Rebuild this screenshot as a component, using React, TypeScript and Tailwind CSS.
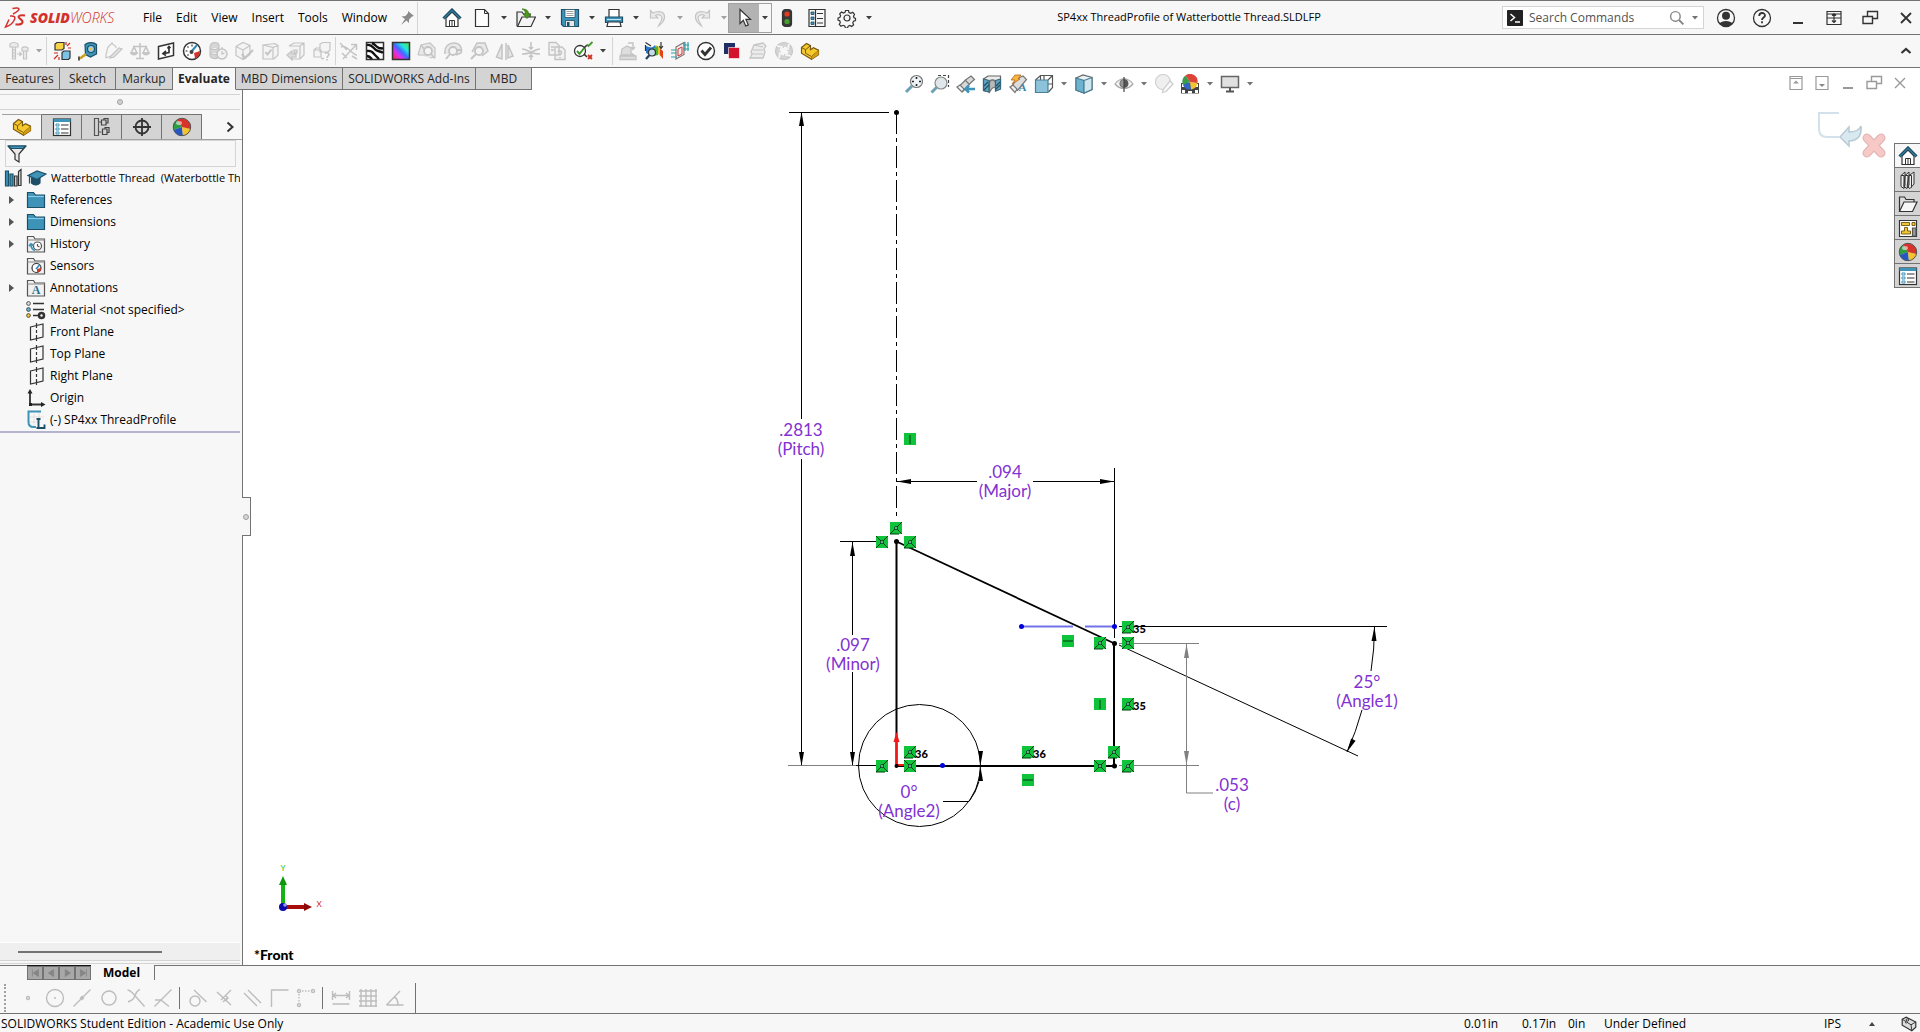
import type { ReactNode } from "react";

const BLUE = "#3d93b8";
const NAVY = "#1d4f66";
const INK = "#333333";
const DIM = "#c4c4c4";

type IconProps = { children: ReactNode; className?: string };

function Icon({ children, className = "h-5 w-5" }: IconProps) {
  return (
    <svg viewBox="0 0 20 20" fill="none" stroke={INK} strokeWidth="1.2" className={`${className} shrink-0`} aria-hidden="true">
      {children}
    </svg>
  );
}

function Caret({ label, className = "w-3.5 text-neutral-700" }: { label: string; className?: string }) {
  return (
    <button type="button" aria-label={label} className={`flex h-5 shrink-0 items-center justify-center ${className}`}>
      <svg viewBox="0 0 6 4" className="h-1 w-1.5" fill="currentColor" aria-hidden="true">
        <path d="M0 0h6L3 3.6z" />
      </svg>
    </button>
  );
}

/* ---------- shared icons ---------- */

const homeIcon = (
  <Icon>
    <path d="M4 10v8.5h12V10L10 4z" fill="#fff" />
    <path d="M7.5 18.5v-6h5v6M10 12.5v6" strokeWidth="1" />
    <path d="M1.5 10.5 10 2l8.5 8.5" stroke={NAVY} strokeWidth="3" />
    <path d="m2 10.3 8-7.8 8 7.8" stroke={BLUE} strokeWidth="1" />
  </Icon>
);

const partIcon = (
  <Icon>
    <path d="m1.5 6.5 5-4 4 2.2v4l3-2 5 2.5v4.5l-7 4.5-10-6z" fill="#f5c92d" stroke="#7a5a10" />
    <path d="m1.5 6.5 4 2.2v3.5l6 3.3v3M5.5 8.7l5-4M11.5 15.5l7-6" stroke="#7a5a10" strokeWidth="1" />
    <path d="m11.5 15.5 7-6v4.2l-7 4.5z" fill="#d29c14" stroke="none" />
  </Icon>
);

const sphereIcon = (
  <Icon>
    <path d="M10 10 5 2.8A9 9 0 0 0 1.5 13z" fill="#2f9e41" stroke="none" />
    <path d="M10 10 1.5 13A9 9 0 0 0 11 19z" fill="#2457c5" stroke="none" />
    <path d="m10 10 1 9a9 9 0 0 0 7.7-7z" fill="#f2c431" stroke="none" />
    <path d="M10 10 18.7 12A9 9 0 0 0 5 2.8z" fill="#d8332b" stroke="none" />
    <circle cx="10" cy="10" r="8.7" stroke="#555" strokeWidth="1" />
    <ellipse cx="7" cy="6" rx="3" ry="2" fill="#fff" opacity=".55" stroke="none" />
  </Icon>
);

const listIcon = (
  <Icon>
    <rect x="1.5" y="2" width="17" height="16.5" fill="#fff" />
    <path d="M1.5 3.5h17" stroke={BLUE} strokeWidth="3" />
    <path d="M4 7h3v2H4zM4 11h3v2H4zM4 15h3v2H4z" stroke={BLUE} strokeWidth="1" />
    <path d="M9 8h7.5M9 12h7.5M9 16h7.5" />
  </Icon>
);

/* ---------- title bar ---------- */

const menus = ["File", "Edit", "View", "Insert", "Tools", "Window"];

const quickTools = [
  {
    name: "New",
    dim: false,
    icon: (
      <Icon>
        <path d="M3.5 1.5h9l4 4v13h-13z" fill="#fdfdfd" />
        <path d="M12.5 1.5v4h4" strokeWidth="1" />
      </Icon>
    ),
  },
  {
    name: "Open",
    dim: false,
    icon: (
      <Icon>
        <path d="M1 18V4h5l1.5 2H14v3" fill="#eee" />
        <path d="M1.5 18.5 6 9h13.5L15 18.5z" fill="#f4f4f4" />
        <path d="M6 1c5 0 6.5 2 6.5 5H15l-4 4.5L7 6h2.5C9.5 3.5 8.5 2 6 1z" fill="#4b9a1d" stroke="#2f6f0d" strokeWidth=".7" />
      </Icon>
    ),
  },
  {
    name: "Save",
    dim: false,
    icon: (
      <Icon>
        <path d="M1.5 1.5h17v17h-15l-2-2z" fill={BLUE} stroke={NAVY} />
        <path d="M5 1.5h10v8H5z" fill="#fff" stroke={NAVY} strokeWidth=".8" />
        <path d="M6.5 3.5h7M6.5 5.5h7M6.5 7.5h7" stroke="#888" strokeWidth=".8" />
        <path d="M5.5 12.5h9v6h-9z" fill="#e8e8e8" stroke={NAVY} strokeWidth=".8" />
        <path d="M7 14h2.5v4.5H7z" fill={NAVY} stroke="none" />
      </Icon>
    ),
  },
  {
    name: "Print",
    dim: false,
    icon: (
      <Icon>
        <path d="M5 9V1.5h10V9" fill="#fff" />
        <path d="M1.5 9h17v5.5h-17z" fill={BLUE} stroke={NAVY} />
        <path d="M4 14h12l1 4.5H3z" fill="#fff" />
        <path d="M3 11.5h14" stroke="#bfe3f2" strokeWidth="1" />
      </Icon>
    ),
  },
  {
    name: "Undo",
    dim: true,
    icon: (
      <Icon>
        <path d="M2.5 2.5v7.5h7.5L7.5 7.5C12 5 16 9 12.5 14l-2 4C18 13 19 4 11 3.5 8.5 3.5 6.5 4 5 5z" fill="#e9e9e9" stroke={DIM} />
      </Icon>
    ),
  },
  {
    name: "Redo",
    dim: true,
    icon: (
      <Icon>
        <path d="M17.5 2.5v7.5H10l2.500-2.500C8 5 4 9 7.500 14l2 4C2 13 1 4 9 3.500c2.500 0 4.500.5 6 1.500z" fill="#e9e9e9" stroke={DIM} />
      </Icon>
    ),
  },
];

function Logo() {
  return (
    <div className="flex w-[143px] shrink-0 items-center pl-1 text-[#d2322d]">
      <svg viewBox="0 0 22 22" className="h-[22px] w-[22px]" fill="none" stroke="currentColor" strokeWidth="1.5" aria-hidden="true">
        <path d="M8.5 1.5c3-.8 6.5-.8 6.5.6S12 5.5 9 7" />
        <path d="M6 9c4.5-.5 6 .8 4 4.5-1.5 3-5 5.5-8.5 6.5L5 12.5" />
        <path d="M21 8.5c-4-.7-6.5 0-6.5 1.5s5 3 4 5.5c-.8 1.8-4 2.2-7 1.7" strokeWidth="2" />
      </svg>
      <span className="ml-1 text-sm leading-4 italic">
        <b className="font-extrabold">SOLID</b>
        <span className="font-light">WORKS</span>
      </span>
    </div>
  );
}

const windowButtons = [
  {
    name: "Account",
    icon: (
      <Icon>
        <circle cx="10" cy="10" r="8.5" strokeWidth="1.3" />
        <circle cx="10" cy="7.8" r="4" fill={INK} stroke="none" />
        <path d="M3.5 15.5c2-3.5 11-3.5 13 0-3 4-10 4-13 0z" fill={INK} stroke="none" />
      </Icon>
    ),
  },
  {
    name: "Help",
    icon: (
      <Icon>
        <circle cx="10" cy="10" r="8.5" strokeWidth="1.3" />
        <path d="M7.2 8c0-4 5.8-3.8 5.8-.5 0 2-3 2.2-3 4.5M10 13.3v2" strokeWidth="1.8" />
      </Icon>
    ),
  },
  { name: "Minimize", icon: <Icon><path d="M5 15h10" strokeWidth="2" /></Icon> },
  { name: "Span displays", icon: <Icon><path d="M3 3.5h14v13H3zM3 10h14M3 6h14M10 5.5v9M8 7.5l2-2 2 2M8 12.5l2 2 2-2" /></Icon> },
  { name: "Restore", icon: <Icon><path d="M7.5 8.5v-5h10v7h-5M3 8.5h9.5v7H3z" strokeWidth="1.4" /></Icon> },
  { name: "Close", icon: <Icon><path d="m5 5 10 10M15 5 5 15" strokeWidth="1.8" /></Icon> },
];

function TitleBar() {
  return (
    <header className="flex h-[35px] items-center border-y border-neutral-500 bg-[#f7f7f7]">
      <Logo />
      <nav className="flex gap-3.5">
        {menus.map((m) => (
          <button type="button" key={m}>{m}</button>
        ))}
      </nav>
      <button type="button" aria-label="Pin menu" className="ml-2.5">
        <Icon>
          <path d="m11 3 6 5-2 .5-3 3v3.5L9.5 12.5 4 17l4-6-3.5-2.5 4-.5 2.5-3z" fill="#8a8a8a" stroke="none" />
        </Icon>
      </button>
      <div className="mr-6 h-8 w-px bg-neutral-300" />
      <button type="button" aria-label="Home" className="mr-2.5">{homeIcon}</button>
      {quickTools.map((t) => (
        <div key={t.name} className="flex w-11 shrink-0 items-center">
          <button type="button" aria-label={t.name}>{t.icon}</button>
          <Caret label={`${t.name} options`} className={t.dim ? "w-6 text-neutral-400" : "w-6 text-neutral-700"} />
        </div>
      ))}
      <div className="-ml-2 flex h-[30px] border border-neutral-400">
        <button type="button" aria-label="Select" className="flex w-[30px] items-center justify-center bg-[#b3b3b3]">
          <Icon>
            <path d="M6 1.5v14l3.3-3.2 2.4 5.7 2.6-1.1-2.4-5.5h4.6z" fill="#fff" />
          </Icon>
        </button>
        <Caret label="Select options" className="mt-1 w-3 text-neutral-700" />
      </div>
      <button type="button" aria-label="Rebuild" className="flex w-[30px] justify-center">
        <Icon>
          <rect x="5.5" y="1.5" width="9" height="17" rx="3" fill="#3a3a3a" />
          <circle cx="10" cy="6" r="2.6" fill="#e33b20" stroke="none" />
          <circle cx="10" cy="13.5" r="2.6" fill="#47a02c" stroke="none" />
        </Icon>
      </button>
      <button type="button" aria-label="File properties" className="flex w-[30px] justify-center">
        <Icon>
          <path d="M2 1.5h16v17H2zM8.5 1.5v17" />
          <path d="M4 4h3v2.5H4zM4 9h3v2.5H4zM4 14h3v2.5H4z" fill={BLUE} stroke={NAVY} strokeWidth=".8" />
          <path d="M10 5.5h6M10 10.5h6M10 15h6" strokeWidth="1" />
        </Icon>
      </button>
      <button type="button" aria-label="Options" className="flex w-[30px] justify-center">
        <Icon>
          <circle cx="10" cy="10" r="3" />
          <path d="m8.5 2.5 3 0 .5 2 1.7.8 2-1 1.8 2-1 1.9.5 1.6 1.5.7v2l-2 .7-.7 1.6.8 2-1.9 1.7-1.9-1-1.6.6-.7 1.9h-2l-.8-2-1.7-.7-2 .9-1.7-1.8 1-2-.6-1.6-1.7-.7v-2l1.9-.7.7-1.7-.9-1.9 1.8-1.8 1.9 1 1.6-.6z" />
        </Icon>
      </button>
      <Caret label="Options menu" />
      <h1 className="min-w-0 flex-1 truncate text-center text-[11px]">SP4xx ThreadProfile of Watterbottle Thread.SLDLFP</h1>
      <label className="mr-1 flex h-[23px] w-[202px] items-center border border-neutral-300 bg-white pl-1">
        <svg viewBox="0 0 16 16" className="h-4 w-4 shrink-0" fill="none" stroke="#fff" aria-hidden="true">
          <path d="M.5.5h15v15H.5z" fill="#222" stroke="#222" />
          <path d="m3.5 4 4 3.5-4 3.5" strokeWidth="1.5" />
          <path d="M8 12h5" strokeWidth="1.5" />
        </svg>
        <input aria-label="Search Commands" placeholder="Search Commands" className="ml-1.5 w-0 flex-1 text-xs outline-none placeholder:text-neutral-600" />
        <Icon className="h-4 w-4">
          <circle cx="8" cy="8" r="6" stroke="#888" strokeWidth="1.8" />
          <path d="m12.5 12.5 5.5 5.5" stroke="#888" strokeWidth="2.5" />
        </Icon>
        <Caret label="Search scope" className="ml-0.5 w-4 text-neutral-500" />
      </label>
      <div className="-mr-1 flex">
        {windowButtons.map((b) => (
          <button type="button" key={b.name} aria-label={b.name} className="flex w-9 justify-center">{b.icon}</button>
        ))}
      </div>
    </header>
  );
}

/* ---------- evaluate toolbar ---------- */

const studyTools = [
  {
    name: "Interference Detection",
    icon: (
      <Icon>
        <path d="m3 3 2-1.5h7v6L10 9H3z" fill="#f7d447" />
        <path d="m10 11.5 2-1.5h6v7l-1.5 1.5H10z" fill="#7cc3e6" />
        <path d="M14 1v3M18 2l-3 3M19 7h-3M2 12h4M2 18l4-4M7 19v-3" stroke="#cc2b1f" />
      </Icon>
    ),
  },
  {
    name: "Measure",
    icon: (
      <Icon>
        <path d="M7 3.5c4-3 9-2 11.5 0V13l-6 3-5-2.5z" fill={BLUE} stroke={NAVY} />
        <circle cx="13" cy="8" r="3.5" fill="#9bd0e8" stroke={NAVY} />
        <circle cx="13" cy="8" r="1.3" fill="#f2c431" stroke="none" />
        <path d="m8 13-6 4.5" stroke="#caa21b" strokeWidth="2.5" />
        <path d="M1 15.5v4" strokeWidth="1.6" />
      </Icon>
    ),
  },
  {
    name: "Markup",
    icon: (
      <Icon>
        <path d="M2 17c-1-3 1-5 1-8 0-4 3-4 5-7 2 4 4 1 4 5M2 17l5-2" stroke={DIM} />
        <path d="m7 15 8-8 3 1-8 8-4 1z" fill="#e6e6e6" stroke={DIM} />
      </Icon>
    ),
  },
  {
    name: "Mass Properties",
    icon: (
      <Icon>
        <path d="M10 2v15M6 17.5h8M3 5.5h14M4 6l-3 6h6zM16 6l-3 6h6z" stroke={DIM} strokeWidth="1.5" />
        <path d="M1 12c1 2.5 5 2.5 6 0zM13 12c1 2.5 5 2.5 6 0z" fill={DIM} stroke={DIM} />
      </Icon>
    ),
  },
  {
    name: "Section Properties",
    icon: (
      <Icon>
        <path d="M2.5 5.5 17.5 2v12.5L2.5 18z" fill="#fff" strokeWidth="1.5" />
        <path d="M13 6v5.5l-5 1M10 10l-3 2.7 3 1.8M11.5 7.5 13 5.5l1.5 1.5" strokeWidth="1.7" />
      </Icon>
    ),
  },
  {
    name: "Sensor",
    icon: (
      <Icon>
        <circle cx="10" cy="10" r="8.5" fill="#fff" strokeWidth="1.5" />
        <path d="M3.5 10h2M10 3.5v2M5.5 5.5l1 1M5.5 14.5l1-1" />
        <path d="M18 10a8 8 0 0 1-5 7.5L12 12z" fill="#d3352a" stroke="none" />
        <path d="m9 11 6-7" stroke="#2c86b7" strokeWidth="2" />
        <circle cx="9.5" cy="11" r="2" fill="#444" stroke="none" />
      </Icon>
    ),
  },
  {
    name: "Performance Evaluation",
    icon: (
      <Icon>
        <path d="M2 6c0-5 8-6 9-2v11c-1 4-9 3-9-1zM2 7c2 2 7 2 9 0M2 12c2 2 7 2 9 0" fill="#d6d6d6" stroke={DIM} />
        <circle cx="14" cy="13" r="5" fill="#f3f3f3" stroke={DIM} strokeWidth="1.5" />
        <path d="M14 10v3l2.5-1M14 6v2" stroke={DIM} />
      </Icon>
    ),
  },
  {
    name: "Check",
    icon: (
      <Icon>
        <path d="m2 5.5 7-4 7 3v9l-7 5-7-4zM2 5.5l7 3.5v9.5M9 9l7-4.5" stroke={DIM} fill="#f4f4f4" />
        <path d="m8 13 3 4 8-8" stroke={DIM} strokeWidth="2.2" />
      </Icon>
    ),
  },
  {
    name: "Geometry Analysis",
    icon: (
      <Icon>
        <path d="m3 4 12-1.5 3 2v9.5l-4 4H3zM3 4l10 2.5V18M13 6.5l5-2" stroke={DIM} fill="#f4f4f4" />
        <path d="m5.5 11 2 2.5 4-5" stroke={DIM} strokeWidth="2" />
      </Icon>
    ),
  },
  {
    name: "Import Diagnostics",
    icon: (
      <Icon>
        <path d="m3 5 5-3h10v12l-4 4H6v-5M3 5h11v13M14 5l4-3" stroke={DIM} fill="#f4f4f4" />
        <path d="M8 9h3v3H8zM1 14l5-4v3h4v3H6v3z" fill="#ddd" stroke={DIM} />
      </Icon>
    ),
  },
  {
    name: "Compare",
    icon: (
      <Icon>
        <path d="m8 3 3-1.5h7V9l-2 2H8zM2 9h7v7H2zM2 9l2-2h4" stroke={DIM} fill="#f4f4f4" />
        <path d="M13 12.5c2-2 5 0 3.5 2-1 1-1.5 1-1.5 2.5M15 18v1.5M9 17.5h3" stroke={DIM} strokeWidth="1.6" />
      </Icon>
    ),
  },
];

const surfaceTools = [
  {
    name: "Deviation Analysis",
    icon: (
      <Icon>
        <path d="M2 6c6-3 11 8 16 8M4 18 17 4M12 3.5h5.5V9M3 12l5 5M1 2l7 7M13 15l5 3" stroke={DIM} strokeWidth="1.5" />
      </Icon>
    ),
  },
  {
    name: "Zebra Stripes",
    icon: (
      <Icon>
        <path d="M1.5 1.5h17v17h-17z" fill="#fff" strokeWidth="1.5" />
        <path d="M2 4c5-1 6 3 9 5s5 1 7 3M2 10c5-1 6 2 8 4s3 3 4 4M7 2c3 1 4 4 7 5 2 .5 3 0 4 1M2 15c2 0 3 1 5 3" stroke="#111" strokeWidth="2.4" />
      </Icon>
    ),
  },
  {
    name: "Curvature",
    icon: (
      <Icon>
        <defs>
          <linearGradient id="curv" x1="0" y1="1" x2="1" y2="0">
            <stop offset="0" stopColor="#ff2a2a" />
            <stop offset=".3" stopColor="#e32cf0" />
            <stop offset=".5" stopColor="#3c6bff" />
            <stop offset=".7" stopColor="#22e6e0" />
            <stop offset="1" stopColor="#5ae62a" />
          </linearGradient>
        </defs>
        <path d="M1.5 1.5h17v17h-17z" fill="url(#curv)" strokeWidth="1.5" />
      </Icon>
    ),
  },
  {
    name: "Draft Analysis",
    icon: (
      <Icon>
        <path d="m1 14 3-10 9-2 5 5v9l-5 1M1 14h11" stroke={DIM} fill="#e9e9e9" />
        <circle cx="11" cy="10" r="4" stroke={DIM} strokeWidth="1.8" fill="#f4f4f4" />
        <path d="m14 13 4 4.5M4 4l3 4" stroke={DIM} strokeWidth="1.5" />
      </Icon>
    ),
  },
  {
    name: "Undercut Analysis",
    icon: (
      <Icon>
        <path d="M2 13C1 5 6 2 11 2s9 4 7 10l-5 2" stroke={DIM} fill="#e9e9e9" strokeWidth="1.5" />
        <circle cx="10" cy="10" r="4" stroke={DIM} strokeWidth="1.8" fill="#f4f4f4" />
        <path d="m7 13-4 5M14 9h5" stroke={DIM} strokeWidth="2" />
      </Icon>
    ),
  },
  {
    name: "Parting Line Analysis",
    icon: (
      <Icon>
        <path d="m3 11 5-9h8l3 8-6 5" stroke={DIM} fill="#e9e9e9" strokeWidth="1.5" />
        <circle cx="10" cy="10" r="4" stroke={DIM} strokeWidth="1.8" fill="#f4f4f4" />
        <path d="m7 13-5 5" stroke={DIM} strokeWidth="2.2" />
      </Icon>
    ),
  },
  {
    name: "Symmetry Check",
    icon: (
      <Icon>
        <path d="M1.5 16 7 3v15zM11 2v17M18 15l-5-11v13z" stroke={DIM} fill="#e6e6e6" strokeWidth="1.5" />
      </Icon>
    ),
  },
  {
    name: "Thickness Analysis",
    icon: (
      <Icon>
        <path d="M1 8c5 0 6 3 9 3s4-3 9-3M1 13c5 0 6-1 9-1s4 1 9 1M10 1v7M8 6l2 2 2-2M10 19v-5M8 16l2-2 2 2" stroke={DIM} strokeWidth="1.6" />
      </Icon>
    ),
  },
  {
    name: "Compare Documents",
    icon: (
      <Icon>
        <path d="M2 1.5h7l3 3V14H2zM8 6h7l3 3v9.5H8z" stroke={DIM} fill="#f2f2f2" strokeWidth="1.4" />
        <path d="M11 11c1-2 4-1 3.5 1-.5 1-1.5 1-1.5 2.5M13 16v1.5M4 6h3M4 9h3" stroke={DIM} strokeWidth="1.5" />
      </Icon>
    ),
  },
  {
    name: "Check Active Document",
    icon: (
      <Icon>
        <circle cx="7" cy="10" r="5.5" strokeWidth="1.3" fill="#fff" />
        <path d="m4 10 2.5 3 5-6.5" stroke="#3e9a28" strokeWidth="2" />
        <path d="m11 7 3-3M11 13l3 3" strokeWidth="1.6" />
        <path d="m14 3.5 1.5 1.5 4-4" stroke="#3e9a28" strokeWidth="1.8" />
        <path d="m15 14 4 4M19 14l-4 4" stroke="#d0301e" strokeWidth="1.8" />
      </Icon>
    ),
  },
];

const addinTools = [
  {
    name: "Costing",
    icon: (
      <Icon>
        <path d="M2 15h16v3.5H2zM4 8l5-3 4 2v5l3 2H3z" stroke={DIM} fill="#dedede" strokeWidth="1.3" />
        <path d="M10 2h5v6M13 6l2 2.5L17 6" stroke={DIM} strokeWidth="1.4" />
      </Icon>
    ),
  },
  {
    name: "SimulationXpress",
    icon: (
      <Icon>
        <path d="M3 5c6 3 6 3 9-1l6 5v8c-4-5-6-6-9-2z" fill="#e9c52c" stroke="none" />
        <path d="M2 5c4 2 7 2 9-1l2 6-5 5-6-3z" fill="#2378d6" stroke="none" />
        <path d="m10 7 4-2v9l-4 1z" fill="#45b43a" stroke="none" />
        <path d="m16 8 3 2v8l-3-4z" fill="#e2411e" stroke="none" />
        <path d="M1.5 1.5 7 5M1.5 4v6M17 1v6M15 5l2 2.5L19 5" />
        <circle cx="8" cy="11.5" r="3.5" fill="#c3dbe8" />
        <path d="m5.5 14-3.5 4" strokeWidth="2.2" stroke="#246" />
      </Icon>
    ),
  },
  {
    name: "FloXpress",
    icon: (
      <Icon>
        <path d="m6 6 8-4.5v12L6 18z" fill="#fbeceb" stroke="#777" />
        <path d="m8 8 4-2v7l-4 2z" stroke="#c33" strokeWidth="1" />
        <path d="M1 9h5M1 12h5M1 16h6M13 4h6M13 8h6M15 1v9M18 1v9" stroke="#2aa0a8" />
      </Icon>
    ),
  },
  {
    name: "DFMXpress",
    icon: (
      <Icon>
        <circle cx="10" cy="10" r="8.5" fill="#fff" strokeWidth="1.4" />
        <path d="m5.5 9.5 3.5 4 6-7" strokeWidth="2.8" />
      </Icon>
    ),
  },
  {
    name: "DriveWorksXpress",
    icon: (
      <Icon>
        <path d="M2 2h11v11H2z" fill="#1f2f66" stroke="none" />
        <path d="M6.5 6.5h11v11h-11z" fill="#d3122d" stroke="#fff" strokeWidth=".6" />
      </Icon>
    ),
  },
  {
    name: "Sustainability",
    icon: (
      <Icon>
        <path d="m6 4 9-2 3 3-2 3 1 3-2 6H2l2-4-1-2z" stroke={DIM} fill="#ececec" strokeWidth="1.3" />
        <path d="m6 4 9 2M5 9h10M4 13h11" stroke={DIM} />
      </Icon>
    ),
  },
  {
    name: "Part Reviewer",
    icon: (
      <Icon>
        <circle cx="10" cy="10" r="6" stroke="#d4d4d4" strokeWidth="4.5" />
        <circle cx="10" cy="10" r="8.5" stroke={DIM} />
        <circle cx="10" cy="10" r="3.8" stroke={DIM} />
        <path d="m3 5 5 1-2 4M17 15l-5-1 2-4M15 3l-1 5-4-2M5 17l1-5 4 2" stroke="#f7f7f7" strokeWidth="1.7" />
      </Icon>
    ),
  },
  { name: "Part", icon: partIcon },
];

function ToolGroup({ tools }: { tools: { name: string; icon: ReactNode }[] }) {
  return (
    <div className="flex">
      {tools.map((t) => (
        <button type="button" key={t.name} aria-label={t.name} className="flex w-[26px] justify-center">{t.icon}</button>
      ))}
    </div>
  );
}

function CommandBar() {
  return (
    <div className="flex h-[33px] items-center border-b border-neutral-500 bg-[#f7f7f7] pl-1.5">
      <button type="button" aria-label="Fasteners" className="flex w-[26px] justify-center">
        <Icon>
          <path d="M1 3c2-2 6-2 8 0v3H1zM3.5 6v12h3V6M13 7c1-1.5 4-1.5 6 0v3h-6zM14.5 10v8h3v-8M3.5 9h3M3.5 12h3M3.5 15h3M8 13h4M10.5 11l2 2-2 2" fill="#ececec" stroke={DIM} />
        </Icon>
      </button>
      <Caret label="Fastener options" className="w-3.5 text-neutral-400" />
      <div className="mr-0.5 h-7 w-px bg-neutral-300" />
      <ToolGroup tools={studyTools} />
      <div className="h-7 w-px bg-neutral-300" />
      <ToolGroup tools={surfaceTools} />
      <Caret label="Check options" />
      <div className="mx-0.5 h-7 w-px bg-neutral-300" />
      <ToolGroup tools={addinTools} />
      <button type="button" aria-label="Collapse toolbar" className="mr-1 ml-auto">
        <Icon><path d="m5.5 12 4.5-4 4.5 4" strokeWidth="2.2" /></Icon>
      </button>
    </div>
  );
}

const commandTabs = [
  { name: "Features", width: "w-[60px]" },
  { name: "Sketch", width: "w-14" },
  { name: "Markup", width: "w-[57px]" },
  { name: "Evaluate", width: "w-[63px]" },
  { name: "MBD Dimensions", width: "w-[107px]" },
  { name: "SOLIDWORKS Add-Ins", width: "w-[133px]" },
  { name: "MBD", width: "w-14" },
];

function CommandTabs() {
  return (
    <div role="tablist" className="relative z-10 flex h-[22px] w-max">
      {commandTabs.map((t) => {
        const active = t.name === "Evaluate";
        return (
          <button
            type="button"
            role="tab"
            aria-selected={active}
            key={t.name}
            className={`${t.width} border-r border-b border-neutral-500 text-center whitespace-nowrap ${
              active ? "border-b-[#f7f7f7] bg-[#f7f7f7] font-bold" : "bg-[#d4d4d4]"
            } text-neutral-800`}
          >
            {t.name}
          </button>
        );
      })}
    </div>
  );
}

/* ---------- feature tree ---------- */

const folder = (
  <Icon>
    <path d="M1.5 17.5v-15h6l2 2.5h9v12.5z" fill={BLUE} stroke={NAVY} />
    <path d="M2.2 6.5h15.6" stroke="#8accea" />
  </Icon>
);

function GreyFolder({ children }: { children: ReactNode }) {
  return (
    <Icon>
      <path d="M1.5 18V2.5h6L9 5h9.5v13z" fill="#f1f1f1" stroke="#555" />
      <path d="M1.5 6h17" stroke="#999" />
      {children}
    </Icon>
  );
}

const plane = (
  <Icon>
    <path d="M4.5 5 17 2v13L4.5 18zM10.5 1v5M10.5 8v3M10.5 13v6" />
  </Icon>
);

const treeItems = [
  { name: "References", open: true, icon: folder },
  { name: "Dimensions", open: true, icon: folder },
  {
    name: "History",
    open: true,
    icon: (
      <GreyFolder>
        <circle cx="11.5" cy="12" r="4" stroke="#555" fill="#fff" />
        <path d="M11.5 10v2l2 1" stroke="#555" />
        <path d="M5 10.5c0 3 1 5 4 6M3 12l2-2 2.5 1.5" stroke={BLUE} strokeWidth="1.8" />
      </GreyFolder>
    ),
  },
  {
    name: "Sensors",
    open: false,
    icon: (
      <GreyFolder>
        <circle cx="10.5" cy="12" r="4.5" fill="#fff" stroke={INK} />
        <path d="m10 13 3.5-4" stroke="#2c86b7" strokeWidth="1.6" />
        <path d="M15 12a4.5 4.5 0 0 1-4 4.5V13z" fill="#d3352a" stroke="none" />
      </GreyFolder>
    ),
  },
  {
    name: "Annotations",
    open: true,
    icon: (
      <GreyFolder>
        <text x="10" y="16" textAnchor="middle" fontFamily="Liberation Serif, serif" fontWeight="700" fontSize="12" fill="#276f95" stroke="none">A</text>
      </GreyFolder>
    ),
  },
  {
    name: "Material <not specified>",
    open: false,
    icon: (
      <Icon>
        <path d="M7 3.5h11M7 9.5h11M7 15.5h7" strokeWidth="1.7" />
        <circle cx="2.5" cy="3.5" r="1.9" fill="#ddd" strokeWidth=".8" />
        <circle cx="2.5" cy="9.5" r="1.9" fill="#63b5da" strokeWidth=".8" />
        <circle cx="2.5" cy="15.5" r="1.9" fill="#f2c431" strokeWidth=".8" />
        <circle cx="15.5" cy="15.5" r="2.5" strokeWidth="2.5" />
      </Icon>
    ),
  },
  { name: "Front Plane", open: false, icon: plane },
  { name: "Top Plane", open: false, icon: plane },
  { name: "Right Plane", open: false, icon: plane },
  {
    name: "Origin",
    open: false,
    icon: (
      <Icon>
        <path d="M4 3v13.5h13" strokeWidth="1.8" />
        <path d="m1.5 5.5 2.5-4.5 2.5 4.5zM15 14l4.500 2.500L15 19zM3 15h3v3H3z" fill="#222" stroke="none" />
      </Icon>
    ),
  },
  {
    name: "(-) SP4xx ThreadProfile",
    open: false,
    icon: (
      <Icon>
        <path d="M8 4v12M13 2v9M3 7h15M3 12h9" stroke="#d8d8d8" strokeWidth=".7" />
        <path d="M15 1.5H2.5V12c0 3.5 1.5 5 5 5H10" stroke={BLUE} strokeWidth="2" />
        <path d="M10.5 9h4M12.5 9v9M10.5 18h8v-3.5" stroke={NAVY} strokeWidth="1.9" />
      </Icon>
    ),
  },
];

const managerTabs = [
  { name: "FeatureManager", icon: partIcon },
  { name: "PropertyManager", icon: listIcon },
  {
    name: "ConfigurationManager",
    icon: (
      <Icon>
        <path d="M2.5 1.5h4v17h-4zM6.5 5h3M6.5 15h3" stroke="#555" />
        <path d="M9.5 3H14v5H9.5zM10.5 12H15v5.5h-4.5zM12 3V1.5h4V6h-2M13 12v-1.5h4v5h-2" stroke="#444" />
      </Icon>
    ),
  },
  {
    name: "DimXpertManager",
    icon: (
      <Icon>
        <circle cx="10" cy="10" r="6.5" strokeWidth="1.8" />
        <path d="M10 1v18M1 10h18" strokeWidth="1.8" />
      </Icon>
    ),
  },
  { name: "DisplayManager", icon: sphereIcon },
];

function FeaturePanel() {
  return (
    <aside className="flex min-h-0 flex-1 flex-col border-r border-neutral-500 bg-[#f7f7f7]">
      <div className="mt-1 mr-0.5 flex h-4 items-center justify-center border-y border-neutral-300">
        <span className="h-1.5 w-1.5 rounded-full border border-neutral-400 bg-neutral-300" />
      </div>
      <div className="mt-1 flex h-[26px] shrink-0 items-stretch border-b border-neutral-400 pl-0.5">
        {managerTabs.map((t, i) => (
          <button
            type="button"
            key={t.name}
            aria-label={t.name}
            className={`flex w-10 items-center justify-center border-t border-r border-neutral-500 ${i === 0 ? "border-t-neutral-400" : "bg-[#d4d4d4]"}`}
          >
            {t.icon}
          </button>
        ))}
        <button type="button" aria-label="More tabs" className="ml-[18px]">
          <Icon><path d="m7.5 5.5 5 4.5-5 4.5" strokeWidth="2" /></Icon>
        </button>
      </div>
      <label className="mr-1.5 ml-[5px] flex h-[27px] shrink-0 items-center border border-neutral-300 pb-0.5 pl-px">
        <Icon>
          <path d="M1.5 3.5h17L12 11v8l-4-2.5V11z" fill="#e9e9e9" />
          <path d="M1.5 2.8h17l-2.2 2.7H3.7z" fill={BLUE} stroke={NAVY} />
        </Icon>
        <input aria-label="Filter tree" className="min-w-0 flex-1 outline-none" />
      </label>
      <ul className="mr-0.5 overflow-hidden border-b-2 border-[#b4b4cf] whitespace-nowrap">
        <li className="flex h-[22px] items-center pl-1">
          <Icon>
            <path d="M1.5 3h3v15h-3zM6 6h3v12H6z" fill={BLUE} stroke={NAVY} />
            <path d="M10.5 8H13v10h-2.5zM14.5 3.5l2.5-2v16h-2.5z" fill="#ddd" />
          </Icon>
          <Icon className="ml-[3px] h-5 w-5">
            <path d="M4.5 10v5c3 3 7 2 8.5 0v-4.5z" fill={NAVY} stroke={NAVY} />
            <path d="m1 7.5 9-4.5 9 3-9 5.5z" fill={BLUE} stroke={NAVY} />
            <path d="M2.5 8.5v7" stroke={NAVY} />
          </Icon>
          <span className="ml-1 text-[11px] whitespace-pre">Watterbottle Thread  (Waterbottle Th</span>
        </li>
        {treeItems.map((t) => (
          <li key={t.name} className="flex h-[22px] items-center pl-[9px]">
            <span className="flex w-[17px] shrink-0">
              {t.open && (
                <svg viewBox="0 0 5 8" className="h-2 w-[5px]" fill="#555" aria-hidden="true">
                  <path d="m0 0 5 4-5 4z" />
                </svg>
              )}
            </span>
            {t.icon}
            <span className="ml-1">{t.name}</span>
          </li>
        ))}
      </ul>
      <div className="mt-auto mr-0.5 flex h-[18px] items-center border-t border-white bg-[#efefef] pl-[18px]">
        <div className="h-0.5 w-36 bg-neutral-500" />
      </div>
      <div className="mr-0.5 mb-px h-1 border-y border-neutral-300" />
    </aside>
  );
}

/* ---------- heads-up view toolbar ---------- */

const viewTools = [
  {
    name: "Zoom to Fit",
    menu: false,
    icon: (
      <Icon>
        <circle cx="12.5" cy="7.5" r="6" fill="#eef3f5" stroke="#777" />
        <path d="M12.5 3v2M12.5 10v2M8 7.5h2M15 7.5h2" stroke="#222" strokeWidth="1.6" />
        <path d="m8 12-6 6" stroke="#6ea0b5" strokeWidth="3" />
      </Icon>
    ),
  },
  {
    name: "Zoom to Area",
    menu: false,
    icon: (
      <Icon>
        <path d="M8 1.5h10.5V13" strokeDasharray="3 2" stroke="#444" />
        <circle cx="11" cy="9" r="6" fill="#dfe7ea" stroke="#888" />
        <path d="m6.5 13.5-5 5" stroke="#6ea0b5" strokeWidth="3" />
      </Icon>
    ),
  },
  {
    name: "Previous View",
    menu: false,
    icon: (
      <Icon>
        <path d="m15 2 3.5 3.5-4 3.5-7 8-5-4 7-7z" fill="#d8d8d8" stroke="#777" />
        <path d="m1 13 3-2 4 4-2 3zM9 6l4 4" fill="#f4f4f4" stroke="#777" />
        <path d="M10 15h9M13 11.5 9.5 15l3.5 3.5" stroke={BLUE} strokeWidth="2.5" />
      </Icon>
    ),
  },
  {
    name: "Section View",
    menu: false,
    icon: (
      <Icon>
        <path d="M1.5 5 6 2h12.5v10l-5 3V8c0-3-6-3-6 0v10l-6-1.5z" fill="#ececec" stroke="#666" />
        <path d="M7.5 18V8.5c1-3 5-3 6 0V13l-3 1z" fill="#b9b9b9" stroke="#777" />
        <path d="M1.5 5 7 6.5V18l-5.5-1.5zM13.5 6.500l5-1.500v10l-5 2z" fill="#5aa7c6" stroke="#39687b" />
        <path d="m2 12 4-4M2 16l5-5M14 12l4-4M14 15l4-4" stroke="#264e5e" />
      </Icon>
    ),
  },
  {
    name: "Dynamic Annotation Views",
    menu: false,
    icon: (
      <Icon>
        <path d="m15 2 3.5 3.5-9 11-6-4 6-8z" fill="#ddd" stroke="#777" />
        <path d="m2 13 3-2 4 4-2 3.5z" fill="#f1f1f1" stroke="#777" />
        <path d="M7 1h6l-3 4h2l-8 5 3-4H3z" fill="#f6b73c" stroke="#b5651d" strokeWidth=".8" />
        <text x="14.5" y="17" textAnchor="middle" fontFamily="Liberation Serif, serif" fontWeight="700" fontSize="11" fill="#3d88a8" stroke="none">A</text>
      </Icon>
    ),
  },
  {
    name: "View Orientation",
    menu: true,
    icon: (
      <Icon>
        <path d="m1.5 6 5-4.5h12v12l-4 4.5M14 6l4.5-4.5M6.5 2v4M14 10h4M10 1.5V6" stroke="#555" fill="#fff" />
        <path d="M1.5 6H14v12.5H1.5z" fill="#8cc3da" stroke="#4a7f95" />
      </Icon>
    ),
  },
  {
    name: "Display Style",
    menu: true,
    icon: (
      <Icon>
        <path d="m2 4 7-3 9 2.5v12l-8 3.5-8-3z" fill="#e7f3f8" stroke="#666" />
        <path d="m2 4 8 2.5V19l-8-3z" fill="#6db3cf" stroke="#4a7f95" />
        <path d="m10 6.5 8-3v12L10 19z" fill="#cfe6ef" stroke="#4a7f95" />
      </Icon>
    ),
  },
  {
    name: "Hide/Show Items",
    menu: true,
    icon: (
      <Icon>
        <path d="M1 10c5-7 13-7 18 0-5 6-13 6-18 0z" fill="#f3f3f3" stroke="#aaa" />
        <circle cx="10" cy="9.5" r="4" fill="#999" stroke="#777" />
        <path d="M10 5.5a4 4 0 0 1 0 8z" fill="#555" stroke="none" />
        <path d="M10 3v15" stroke="#444" />
      </Icon>
    ),
  },
  {
    name: "Edit Appearance",
    menu: false,
    icon: (
      <Icon>
        <circle cx="9" cy="8" r="7.5" fill="#efefef" stroke="#d0d0d0" />
        <path d="m9 16 7-9 3 3-7 7.5-3.5 1z" fill="#fafafa" stroke="#cbcbcb" />
      </Icon>
    ),
  },
  {
    name: "Apply Scene",
    menu: true,
    icon: (
      <Icon>
        <path d="M1 9h18v10.5H1z" fill="#444" stroke="none" />
        <path d="M2 16h3v3H2zM8 17h4v2.5H8zM15 16h3v3h-3zM2 10h2v3H2zM16 10h2v3h-2z" fill="#fff" stroke="none" />
        <path d="M10 8 5.5 1.5A7.5 7.5 0 0 0 3 11z" fill="#3a9d4a" stroke="none" />
        <path d="M10 8 3 11a7.5 7.5 0 0 0 8 4.5z" fill="#2e66c8" stroke="none" />
        <path d="m10 8 1 7.5A7.5 7.5 0 0 0 17.4 9z" fill="#f2c431" stroke="none" />
        <path d="M10 8 17.4 9A7.5 7.5 0 0 0 5.5 1.5z" fill="#dd4438" stroke="none" />
      </Icon>
    ),
  },
  {
    name: "View Settings",
    menu: true,
    icon: (
      <Icon>
        <path d="M1.5 2.5h17v11h-17z" fill="#e0e0e0" stroke="#666" strokeWidth="1.5" />
        <path d="M10 13.5v4M6 17.5h8" stroke="#555" strokeWidth="2" />
      </Icon>
    ),
  },
];

const documentButtons = [
  { name: "Expand up", icon: <Icon><path d="M4 3.5h12v13H4zM4 5.5h12" stroke="#999" /><path d="m7 10.5 3-3 3 3z" fill="#999" stroke="none" /></Icon> },
  { name: "Expand down", icon: <Icon><path d="M4 3.5h12v13H4z" stroke="#999" /><path d="m7 11 3 3 3-3z" fill="#888" stroke="none" /></Icon> },
  { name: "Minimize document", icon: <Icon><path d="M5 15h10" stroke="#999" strokeWidth="2" /></Icon> },
  { name: "Restore document", icon: <Icon><path d="M7.5 8.5v-5h10v7h-5M3 8.5h9.5v7H3z" stroke="#999" strokeWidth="1.4" /></Icon> },
  { name: "Close document", icon: <Icon><path d="m5 5 10 10M15 5 5 15" stroke="#999" strokeWidth="1.4" /></Icon> },
];

const taskTabs = [
  { name: "Resources", icon: homeIcon },
  {
    name: "Design Library",
    icon: (
      <Icon>
        <path d="M3 5.5 7 2v13l-1 3.5-3-2zM7 5.5 11 2v13l-2 3.5-3-2zM11 5.5 16 2v12l-4 4.5-3-2zM3 5.5h3v12M7 5.5h3v12M11 5.5h2.5v12" fill="#eee" strokeWidth="1" />
      </Icon>
    ),
  },
  {
    name: "File Explorer",
    icon: (
      <Icon>
        <path d="M1.5 17.5V3h5L8 5.5h8V8" fill="#ddd" />
        <path d="M1.5 17.5 6 8h13l-4.5 9.5z" fill="#f7f7f7" />
      </Icon>
    ),
  },
  {
    name: "View Palette",
    icon: (
      <Icon>
        <path d="M1.5 2.5h17v16h-17z" fill="#fff" />
        <path d="M3.5 4.5h8v3h-8zM14 4.5h3v3h-3zM6.5 9.5h3V13h3v3h-9v-3h3z" fill="#f2c431" stroke="#6b5510" strokeWidth=".9" />
        <path d="M14.5 10H18v8h-3.5z" fill="#999" stroke="#555" />
      </Icon>
    ),
  },
  { name: "Appearances", icon: sphereIcon },
  { name: "Custom Properties", icon: listIcon },
];

/* ---------- sketch ---------- */

type RelationKind = "v" | "h" | "c" | "x";

const relations: { x: number; y: number; kind: RelationKind; tag?: string }[] = [
  { x: 910, y: 439, kind: "v" },
  { x: 896, y: 528, kind: "c" },
  { x: 882, y: 542, kind: "x" },
  { x: 910, y: 542, kind: "c" },
  { x: 1068, y: 641, kind: "h" },
  { x: 1100, y: 643, kind: "c" },
  { x: 1128, y: 643, kind: "x" },
  { x: 1128, y: 627, kind: "c", tag: "35" },
  { x: 1100, y: 704, kind: "v" },
  { x: 1128, y: 704, kind: "c", tag: "35" },
  { x: 1114, y: 752, kind: "c" },
  { x: 1100, y: 766, kind: "x" },
  { x: 1128, y: 766, kind: "c" },
  { x: 1028, y: 752, kind: "c", tag: "36" },
  { x: 1028, y: 780, kind: "h" },
  { x: 910, y: 752, kind: "c", tag: "36" },
  { x: 910, y: 766, kind: "x" },
  { x: 882, y: 766, kind: "c" },
];

const relationGlyph = {
  v: "M0-4V5",
  h: "M-5 0H5",
  c: "M6-6 1-1M-6 6l5-5M1 1l5 5M-6 6H3",
  x: "M-6-6l5 5M6-6 1-1M-6 6l5-5M1 1l5 5",
};

const labels = [
  { x: 801, y: 436, value: ".2813", name: "(Pitch)" },
  { x: 1005, y: 478, value: ".094", name: "(Major)" },
  { x: 853, y: 651, value: ".097", name: "(Minor)" },
  { x: 909, y: 798, value: "0°", name: "(Angle2)" },
  { x: 1367, y: 688, value: "25°", name: "(Angle1)" },
  { x: 1232, y: 791, value: ".053", name: "(c)" },
];

// Arrow heads point at (x, y); angle 0 is up.
const arrows = [
  { x: 801.5, y: 112, a: 0, fill: "#000" },
  { x: 801.5, y: 766, a: 180, fill: "#000" },
  { x: 852.5, y: 542, a: 0, fill: "#000" },
  { x: 852.5, y: 766, a: 180, fill: "#000" },
  { x: 897, y: 481.5, a: -90, fill: "#000" },
  { x: 1114, y: 481.5, a: 90, fill: "#000" },
  { x: 1186.5, y: 644, a: 0, fill: "#808080" },
  { x: 1186.5, y: 765, a: 180, fill: "#808080" },
  { x: 1374.5, y: 627, a: 2, fill: "#000" },
  { x: 1347, y: 752, a: 207, fill: "#000" },
  { x: 980.5, y: 765, a: 180, fill: "#000" },
  { x: 980.5, y: 767, a: 0, fill: "#000" },
];

function Sketch() {
  return (
    <svg className="absolute inset-0 h-full w-full" fill="none" stroke="#000" role="img" aria-label="Thread profile sketch">
      <g transform="translate(-243 -68)">
        <g>
          <path d="M789 112.5h100M801.5 112v307M801.5 459v307" />
          <path d="M840 541.5h37M852.5 542v93M852.5 672v94M840 765.5h37" />
          <path d="M897 481.5h80M1033 481.5h81M1114.5 468v170" />
          <path d="M1119 626.5h268M1119 645l239 111" />
          <path d="M1374.5 627q0 22-3.5 44M1362 710q-6 22-15 42" />
          <path d="M943 801.5h26q7-9 10-20" />
          <circle cx="919.5" cy="765.5" r="61" />
          <path d="M788 765.5h68" stroke="#808080" />
          <path d="M1119 643.5h80M1119 765.5h80M1186.5 643v150H1213" stroke="#808080" />
        </g>
        <path d="M896.5 112v407" strokeDasharray="22 4 4 4" />
        <path d="M896.5 541V766H1114M1114 766V643" strokeWidth="2" />
        <path d="m896.5 541.5 218 102" strokeWidth="1.8" />
        <path d="M1021 626.5h52M1085 626.5h29" stroke="#7272e8" strokeWidth="2" />
        <path d="M896.5 765V738M897 765h10" stroke="#f01818" strokeWidth="2" />
        <path d="m896.5 732 3 10h-6z" fill="#f01818" stroke="none" />
        {arrows.map((a, i) => (
          <path key={i} d="M0 0 2.5 14h-5z" fill={a.fill} stroke="none" transform={`translate(${a.x} ${a.y}) rotate(${a.a})`} />
        ))}
        <g fill="#000" stroke="none">
          <circle cx="896.5" cy="112.5" r="2.5" />
          <circle cx="896.5" cy="541.5" r="2.5" />
          <circle cx="1114.5" cy="643.5" r="2.5" />
          <circle cx="1114.5" cy="766" r="2.5" />
          <circle cx="896.5" cy="766" r="2" />
        </g>
        <g fill="#0000d8" stroke="none">
          <circle cx="1021.5" cy="626.5" r="2.5" />
          <circle cx="1114.5" cy="626.5" r="2.5" />
          <circle cx="942.5" cy="765.5" r="2.5" />
        </g>
        {relations.map((r) => (
          <g key={`${r.x}-${r.y}`} transform={`translate(${r.x} ${r.y})`}>
            <path d="M-6-6H6V6H-6z" fill="#0fc43a" stroke="none" />
            <path d={relationGlyph[r.kind]} stroke="#003b10" />
            {(r.kind === "c" || r.kind === "x") && <circle r="1.5" fill="#7fd791" stroke="#123" strokeWidth=".8" />}
            {r.tag && (
              <text x="5" y="6" className="font-['Lato'] text-[11px] font-black" fill="#000" stroke="none">{r.tag}</text>
            )}
          </g>
        ))}
        <g className="font-['Lato'] text-[17px]" fill="#8232d2" stroke="none" textAnchor="middle">
          {labels.map((l) => (
            <text key={l.name} x={l.x} y={l.y}>
              {l.value}
              <tspan x={l.x} dy="19">{l.name}</tspan>
            </text>
          ))}
        </g>
      </g>
    </svg>
  );
}

function Triad() {
  return (
    <svg viewBox="0 0 60 56" className="h-14 w-[60px]" aria-hidden="true">
      <path d="M17 21h4v26h-4z" fill="#12b312" />
      <path d="m19 15 4 9h-8z" fill="#0c960c" />
      <path d="M19 44h21v4H19z" fill="#a80d0d" />
      <path d="m48 46-8-4v8z" fill="#8c0a0a" />
      <circle cx="19" cy="46" r="4" fill="#0a0aa8" />
      <circle cx="21" cy="44" r="1.8" fill="#9a9ae6" />
      <text x="19" y="10" textAnchor="middle" className="font-['Lato'] text-[8px]" fill="#19c419">Y</text>
      <text x="55" y="46" textAnchor="middle" className="font-['Lato'] text-[8px]" fill="#d42020">X</text>
    </svg>
  );
}

function Viewport() {
  return (
    <main className="relative min-w-0 flex-1 bg-white">
      <Sketch />
      <div className="relative flex h-[31px] items-center justify-center pr-1.5">
        {viewTools.map((t) => (
          <div key={t.name} className="flex">
            <button type="button" aria-label={t.name} className="flex w-[26px] justify-center">{t.icon}</button>
            {t.menu && <Caret label={`${t.name} options`} className="w-3.5 text-neutral-500" />}
          </div>
        ))}
      </div>
      <div className="absolute top-[5px] right-[7px] flex">
        {documentButtons.map((b) => (
          <button type="button" key={b.name} aria-label={b.name} className="flex w-[26px] justify-center">{b.icon}</button>
        ))}
      </div>
      <div className="absolute top-8 right-8 flex">
        <button type="button" aria-label="Exit sketch">
          <svg viewBox="0 0 48 40" className="h-10 w-12" fill="none" aria-hidden="true">
            <path d="M23 3H3v16c0 5 3 8 8 8h12" stroke="#d3e2ea" strokeWidth="2" />
            <path d="m24 27 9-10v5c6 0 10-1 12-6 1 10-4 15-12 15v5z" fill="#d9e9f2" stroke="#b9c9d3" strokeWidth="1.5" />
          </svg>
        </button>
        <button type="button" aria-label="Cancel sketch" className="-ml-1 mt-8">
          <svg viewBox="0 0 28 28" className="h-7 w-7" fill="none" strokeLinecap="round" aria-hidden="true">
            <path d="m7 6 14 15M21 6 7 21" stroke="#e2b5b5" strokeWidth="9" />
            <path d="m7 6 14 15M21 6 7 21" stroke="#f6c8c6" strokeWidth="6.5" />
          </svg>
        </button>
      </div>
      <div className="absolute top-[75px] right-0 flex flex-col border-t border-l border-neutral-500">
        {taskTabs.map((t, i) => (
          <button
            type="button"
            key={t.name}
            aria-label={t.name}
            className={`flex h-6 w-[25px] items-center justify-center border-b border-neutral-500 ${i === 0 ? "bg-[#f7f7f7]" : "bg-[#d4d4d4]"}`}
          >
            {t.icon}
          </button>
        ))}
      </div>
      <button
        type="button"
        aria-label="Collapse panel"
        className="absolute top-[429px] -left-px flex h-[39px] w-[9px] items-center justify-center border border-l-0 border-neutral-500 bg-[#f7f7f7]"
      >
        <span className="h-1.5 w-1.5 rounded-full border border-neutral-400 bg-neutral-300" />
      </button>
      <div className="absolute bottom-0 left-[11px] flex flex-col">
        <span className="ml-2.5"><Triad /></span>
        <span className="mt-7 font-['Lato'] text-sm leading-5 font-black text-black">*Front</span>
      </div>
    </main>
  );
}

/* ---------- bottom bars ---------- */

const pageButtons = [
  { name: "First tab", d: "M4 3v8M11 3v8L5 7z" },
  { name: "Previous tab", d: "M10 3v8L4 7z" },
  { name: "Next tab", d: "M5 3v8l6-4z" },
  { name: "Last tab", d: "M4 3v8l6-4zM11 3v8" },
];

const snapGroups = [
  [
    { name: "Point", d: "M8.5 10a1.5 1.5 0 1 0 3 0 1.5 1.5 0 1 0-3 0" },
    { name: "Center", d: "M1.5 10a8.5 8.5 0 1 0 17 0 8.5 8.5 0 1 0-17 0M9 10h2" },
    { name: "Midpoint", d: "M1.5 18.5 18.5 1.5M8.5 10l1.5-1.5 1.5 1.5-1.5 1.5z" },
    { name: "Quadrant", d: "M3 10a7 7 0 1 0 14 0 7 7 0 1 0-14 0M8.5 3h3M8.5 17h3M3 8.5v3M17 8.5v3" },
    { name: "Intersection", d: "M1.5 2c3 0 4 2 6 4l11 12.5M14 1.5C9 3 10 9 6 12l-4 2" },
    { name: "Nearest", d: "M1.5 18.5 18.5 1.5M8 12l8 6.5M2 12h7" },
  ],
  [
    { name: "Tangent", d: "M2 13a5 5 0 1 0 10 0 5 5 0 1 0-10 0M6 2l12.5 12" },
    { name: "Perpendicular", d: "M2 4l14 13M6 12 16 2M10 7l3 3-3 3M8 14l4-4" },
    { name: "Parallel", d: "M2 5l13 13M6 2l13 13" },
    { name: "Horizontal/Vertical", d: "M2.5 19V2h17" },
    { name: "Points snap", d: "M1.5 3a1.5 1.5 0 1 0 3 0 1.5 1.5 0 1 0-3 0M15.5 3a1.5 1.5 0 1 0 3 0 1.5 1.5 0 1 0-3 0M1.5 17a1.5 1.5 0 1 0 3 0 1.5 1.5 0 1 0-3 0M6 3h1.5M9 3h1.5M12 3h1.5M3 6v1.5M3 9v1.5M3 12v1.5" },
  ],
  [
    { name: "Length", d: "M1.5 3v9M18.5 3v9M2 7.5h16M5 5 2 7.5 5 10M15 5l3 2.5-3 2.5M1.5 16h17" },
    { name: "Grid", d: "M1 3h18M1 8h18M1 13h18M1 18h18M3 1v18M8 1v18M13 1v18M18 1v18" },
    { name: "Angle", d: "M1.5 17 15 3M1.5 17h17M9 9c3 1 4 4 4 8" },
  ],
];

function BottomBars() {
  return (
    <footer className="bg-[#f7f7f7]">
      <div className="flex h-4">
        <div className="w-[27px] border-t border-neutral-500" />
        <div className="flex h-[15px] border-t border-neutral-900 bg-[#a8a8a8]">
          {pageButtons.map((b) => (
            <button type="button" key={b.name} aria-label={b.name} className="h-3.5 w-4 border border-neutral-500">
              <svg viewBox="0 0 14 14" className="h-3 w-3.5" fill="#858585" stroke="#858585" aria-hidden="true">
                <path d={b.d} />
              </svg>
            </button>
          ))}
        </div>
        <button type="button" className="h-[15px] w-16 border-r border-neutral-500 pr-1.5 pl-3 text-left leading-3 font-bold">Model</button>
        <div className="flex-1 border-t border-neutral-500" />
      </div>
      <div className="flex h-[33px] items-center border-b border-neutral-500 pt-0.5 pl-1">
        <div className="mr-2 h-7 w-0 border-l-2 border-dotted border-neutral-400" />
        {snapGroups.map((group, i) => (
          <div key={i} className="flex items-center">
            {group.map((s) => (
              <button type="button" key={s.name} aria-label={s.name} className="flex w-[27px] justify-center">
                <Icon><path d={s.d} stroke="#bdbdbd" strokeWidth="1.4" /></Icon>
              </button>
            ))}
            <div className={i === 2 ? "ml-[7px] h-[30px] w-px bg-neutral-500" : "mr-1 ml-[3px] h-[22px] w-px bg-neutral-500"} />
          </div>
        ))}
      </div>
      <div className="flex h-[18px] items-center pt-0.5 pr-0.5 pl-px leading-4">
        <span>SOLIDWORKS Student Edition - Academic Use Only</span>
        <span className="ml-auto w-[58px]">0.01in</span>
        <span className="w-[46px]">0.17in</span>
        <span className="w-9">0in</span>
        <span className="w-[220px]">Under Defined</span>
        <button type="button" className="flex w-[76px] items-center">
          IPS
          <svg viewBox="0 0 6 4" className="ml-7 h-1 w-1.5" fill="#444" aria-hidden="true"><path d="m0 4 3-4 3 4z" /></svg>
        </button>
        <button type="button" aria-label="Custom tags">
          <Icon className="h-4 w-[18px]">
            <path d="m1.5 4 5-2.5 12 6V14l-5 4.5-12-7z" fill="#ddd" strokeWidth="1.5" />
            <path d="m1.5 4 11 7 6-3.5M12.5 11l1 7M5 8l2 1" />
            <circle cx="8" cy="5" r="1.5" />
          </Icon>
        </button>
      </div>
    </footer>
  );
}

export default function App() {
  return (
    <div className="flex h-screen flex-col overflow-hidden bg-[#f7f7f7] font-['Open_Sans',sans-serif] text-xs text-black select-none">
      <TitleBar />
      <CommandBar />
      <div className="flex min-h-0 flex-1">
        <div className="flex w-[243px] shrink-0 flex-col">
          <CommandTabs />
          <FeaturePanel />
        </div>
        <Viewport />
      </div>
      <BottomBars />
    </div>
  );
}
